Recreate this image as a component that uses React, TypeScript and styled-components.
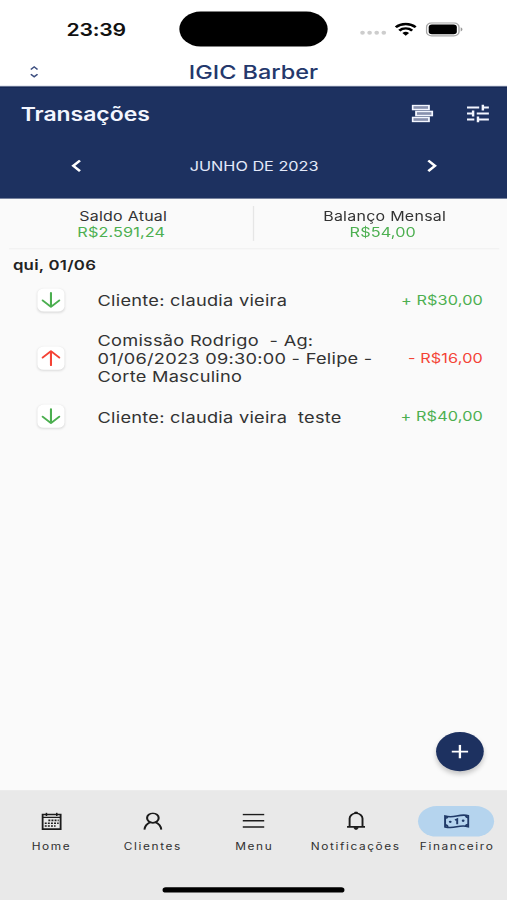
import React from 'react';
import styled, { createGlobalStyle } from 'styled-components';

const NAVY = '#1d3160';
const GREEN = '#4caf50';
const RED = '#f44336';

const GlobalStyle = createGlobalStyle`
  *, *::before, *::after { box-sizing: border-box; }
  html, body { margin: 0; padding: 0; background: #fff; }
  body { width: 507px; height: 900px; overflow: hidden; }
  svg { display: block; flex: none; }
`;

/* The phone screen is laid out in 393 x 852 points and scaled to the window. */
const Screen = styled.div`
  width: 393px;
  height: 852px;
  transform: scale(1.29008, 1.05634);
  transform-origin: 0 0;
  display: flex;
  flex-direction: column;
  background: #fafafa;
  color: #333;
  font-family: Inter, 'Liberation Sans', sans-serif;
  white-space: nowrap;
`;

const StatusBar = styled.div`
  height: 55px;
  flex: none;
  background: #fff;
  display: grid;
  grid-template-columns: 139.2px 114.8px 1fr;
  align-items: center;
`;

const Clock = styled.div`
  padding-left: 51.5px;
  font-size: 16.4px;
  font-weight: 600;
  color: #111;
  letter-spacing: -0.15px;
`;

const Island = styled.div`
  height: 33.6px;
  border-radius: 17px;
  background: #000;
`;

const StatusIcons = styled.div`
  display: flex;
  align-items: center;
  padding-left: 24.6px;
`;

const SignalSlot = styled.div`
  padding-top: 7px;
  margin-right: 6.5px;
`;

const WifiSlot = styled.div`
  margin-right: 7px;
  margin-bottom: 1px;
`;

const TitleBar = styled.header`
  height: 27.3px;
  flex: none;
  background: #fff;
  display: grid;
  grid-template-columns: 60px 1fr 60px;
  align-items: center;
  border-bottom: 0.6px solid #ccd2e2;
`;

const Sorter = styled.div`
  padding-left: 22.8px;
`;

const AppTitle = styled.h1`
  margin: 0;
  text-align: center;
  font-size: 18.2px;
  font-weight: 500;
  line-height: 26px;
  color: #24386c;
`;

const Banner = styled.section`
  height: 105.5px;
  flex: none;
  background: ${NAVY};
  color: #f3f6ff;
  border-top: 1px solid #12244f;
`;

const BannerTop = styled.div`
  height: 50px;
  display: flex;
  align-items: center;
  padding: 0 13.6px 0 16px;
`;

const PageTitle = styled.h2`
  margin: 0;
  flex: 1;
  font-size: 17.8px;
  font-weight: 600;
`;

const BannerActions = styled.div`
  display: flex;
  align-items: center;
  gap: 26px;
  padding-bottom: 1px;
`;

const MonthRow = styled.div`
  height: 48px;
  display: grid;
  grid-template-columns: 118px 1fr 117px;
  align-items: center;
  justify-items: center;
`;

const Month = styled.div`
  font-size: 12.6px;
  color: #e3e9fa;
`;

const Totals = styled.section`
  height: 48px;
  flex: none;
  margin: 0 6.5px;
  display: grid;
  grid-template-columns: 1fr 1.6px 1fr;
  align-items: center;
  border-bottom: 1px solid #f0f0f0;
`;

const TotalsRule = styled.div`
  height: 32.5px;
  background: #e6e6e6;
`;

const Total = styled.div<{ $shift: number }>`
  text-align: center;
  transform: translateX(${(p) => p.$shift}px);
  padding-top: 2px;
  line-height: 15.3px;
`;

const TotalLabel = styled.div`
  font-size: 12.4px;
  letter-spacing: 0.2px;
`;

const TotalValue = styled.div`
  font-size: 12.6px;
  color: ${GREEN};
  letter-spacing: 0.1px;
  margin-right: 3px;
`;

const DayHeading = styled.h3`
  margin: 0;
  flex: none;
  padding: 0 10px;
  height: 29px;
  line-height: 30px;
  font-size: 13px;
  font-weight: 600;
  color: #222;
  letter-spacing: 0.2px;
`;

const List = styled.main`
  flex: 1;
  position: relative;
`;

const Row = styled.div<{ $tall?: boolean }>`
  height: ${(p) => (p.$tall ? '71.4px' : '39.2px')};
  display: grid;
  grid-template-columns: 47px 1fr auto;
  align-items: center;
  padding: 0 18.7px 0 28.6px;
`;

const Tile = styled.div`
  width: 21px;
  height: 22px;
  margin-bottom: 1px;
  display: grid;
  place-items: center;
  background: #fff;
  border-radius: 5px;
  box-shadow: 0 1px 2px rgba(0, 0, 0, 0.12);
`;

const Description = styled.div`
  font-size: 14.1px;
  line-height: 17.3px;
  letter-spacing: 0.21px;
  white-space: pre;
`;

const Amount = styled.div<{ $out?: boolean }>`
  font-size: 12.6px;
  letter-spacing: 0.1px;
  color: ${(p) => (p.$out ? RED : GREEN)};
`;

const Fab = styled.button`
  position: absolute;
  right: 18.2px;
  bottom: 18.3px;
  width: 37px;
  height: 37px;
  padding: 0;
  border: 0;
  border-radius: 50%;
  background: ${NAVY};
  display: grid;
  place-items: center;
  box-shadow: 0 3px 5px rgba(0, 0, 0, 0.22);
`;

const NavBar = styled.nav`
  height: 103.6px;
  flex: none;
  background: #e9e9e9;
  display: flex;
  flex-direction: column;
  align-items: center;
`;

const NavItems = styled.div`
  width: 100%;
  height: 91.6px;
  display: grid;
  grid-template-columns: repeat(5, 1fr);
  padding-top: 14.2px;
`;

const NavItem = styled.div`
  display: flex;
  flex-direction: column;
  align-items: center;
`;

const Pill = styled.div<{ $active?: boolean }>`
  width: 58.4px;
  height: 29.4px;
  padding-left: ${(p) => (p.$active ? '0' : '1px')};
  border-radius: 15px;
  display: grid;
  place-items: center;
  background: ${(p) => (p.$active ? '#b5d4ee' : 'transparent')};
`;

const NavLabel = styled.div`
  margin-top: 2.7px;
  font-size: 9.2px;
  line-height: 14px;
  letter-spacing: 1.25px;
  margin-right: -1.25px;
  color: #303030;
`;

const HomeIndicator = styled.div`
  width: 140.6px;
  height: 4.8px;
  border-radius: 3px;
  background: #000;
`;

const SignalDots = () => (
  <svg width="21" height="6" viewBox="0 0 21 6" fill="#cdcdcd">
    {[2, 7.5, 13, 18.5].map((x) => (
      <circle key={x} cx={x} cy="3" r="1.8" />
    ))}
  </svg>
);

const Wifi = () => (
  <svg width="17" height="13" viewBox="0 0 17 13" fill="none" stroke="#000" strokeWidth="2.3">
    <path d="M.8 4.8a11 11 0 0 1 15.4 0" />
    <path d="M3.5 7.9a7.2 7.2 0 0 1 10 0" />
    <path d="M8.5 12.8 5.9 10.3a3.7 3.7 0 0 1 5.2 0z" fill="#000" stroke="none" />
  </svg>
);

const Battery = () => (
  <svg width="29" height="14" viewBox="0 0 29 14" fill="none">
    <rect x=".6" y=".6" width="25.2" height="12.4" rx="4" stroke="#a8a8a8" strokeWidth="1.1" />
    <rect x="2.3" y="2.2" width="21.8" height="9.2" rx="2.5" fill="#000" />
    <path d="M27.1 4.8c1.8.8 1.8 3.2 0 4z" fill="#999" />
  </svg>
);

const UpDown = () => (
  <svg width="7" height="12" viewBox="0 0 7 12" fill="none" stroke="#3d4f80" strokeWidth="1.3">
    <path d="M.9 3.7l2.6-2.4 2.6 2.4M.9 8.3l2.6 2.4 2.6-2.4" />
  </svg>
);

const Bars = () => (
  <svg width="17" height="17" viewBox="0 0 17 17" fill="#8790ae" stroke="#f3f6ff" strokeWidth="1.4">
    <rect x=".8" y=".8" width="12.7" height="3.9" />
    <rect x="3.5" y="6.5" width="12.6" height="3.9" />
    <rect x=".8" y="12.2" width="12.7" height="3.9" />
  </svg>
);

const Tune = () => (
  <svg width="17" height="17" viewBox="3 3 18 18" fill="#f3f6ff">
    <path d="M3 17v2h6v-2H3zM3 5v2h10V5H3zm10 16v-2h8v-2h-8v-2h-2v6h2zM7 9v2H3v2h4v2h2V9H7zm14 4v-2H11v2h10zm-6-4h2V7h4V5h-4V3h-2v6z" />
  </svg>
);

const Chevron = ({ next }: { next?: boolean }) => (
  <svg width="8" height="12" viewBox="0 0 8 12" fill="none" stroke="#fff" strokeWidth="2.1">
    <path d={next ? 'M1 1l5.2 5L1 11' : 'M7 1L1.8 6 7 11'} />
  </svg>
);

const Arrow = ({ up }: { up?: boolean }) => (
  <svg
    width="15"
    height="16"
    viewBox="0 0 15 16"
    fill="none"
    stroke={up ? RED : GREEN}
    strokeWidth="1.6"
    strokeLinecap="round"
    strokeLinejoin="round"
  >
    <path d={up ? 'M7.5 14.7V1.5M1 7.6l6.5-6.1L14 7.6' : 'M7.5 1.3v13.2M1 8.4l6.5 6.1L14 8.4'} />
  </svg>
);

const Plus = () => (
  <svg width="13" height="13" viewBox="0 0 13 13" stroke="#fff" strokeWidth="1.8">
    <path d="M6.5 0v13M0 6.5h13" />
  </svg>
);

const Calendar = () => (
  <svg width="16" height="17" viewBox="0 0 16 17" fill="none" stroke="#1c1c1c">
    <path d="M1 2.1h14v13.8H1z" strokeWidth="1.5" />
    <path d="M1 4.7h14M4 .4v3M12 .4v3" strokeWidth="1.2" />
    <path d="M5.5 7.6h8M2.7 10.3h10.8M2.7 13h8.4" strokeWidth="1.5" strokeDasharray="1.5 .9" />
  </svg>
);

const Person = () => (
  <svg width="15" height="17" viewBox="0 0 15 17" fill="none" stroke="#1c1c1c" strokeWidth="1.6">
    <circle cx="7.5" cy="5.4" r="4.5" />
    <path d="M.9 16.4c.4-3.9 2.6-5.9 4.5-7M14.1 16.4c-.4-3.9-2.6-5.9-4.5-7" />
  </svg>
);

const Menu = () => (
  <svg width="17" height="14" viewBox="0 0 17 14" stroke="#1c1c1c" strokeWidth="1.4">
    <path d="M0 1h17M0 7h17M0 13h17" />
  </svg>
);

const Bell = () => (
  <svg width="14" height="18" viewBox="0 0 14 18" fill="none" stroke="#1c1c1c" strokeWidth="1.5">
    <path d="M2 14.6V6.9a5 5 0 0 1 10 0v7.7" />
    <path d="M0 14.8h14" />
    <path d="M5.4 15.3a1.6 1.9 0 0 0 3.2 0zM6 2V.7h2V2z" fill="#1c1c1c" strokeWidth=".7" />
  </svg>
);

const Money = () => (
  <svg width="20" height="15" viewBox="0 0 20 15" fill="none" stroke="#203a68" strokeWidth="1.5">
    <path d="M1 2.5c3 1.1 6 .8 9 0s6-1.3 9-.3v10.4c-3-1-6-.7-9 .1s-6 1.1-9 .1z" />
    <path d="M1 4.6q1.7 0 2-1.6M19 4.1q-1.7-.2-2-2M1 10.9q1.7 0 2 2M19 10.6q-1.7-.2-2 1.5" />
    <path d="M8.7 6.4l1.7-1v5" />
    <circle cx="5" cy="8" r="1.1" fill="#203a68" stroke="none" />
    <circle cx="15" cy="7" r="1.1" fill="#203a68" stroke="none" />
  </svg>
);

const transactions = [
  { text: 'Cliente: claudia vieira', amount: '+ R$30,00', out: false },
  {
    text: 'Comissão Rodrigo  - Ag:\n01/06/2023 09:30:00 - Felipe -\nCorte Masculino',
    amount: '- R$16,00',
    out: true,
  },
  { text: 'Cliente: claudia vieira  teste', amount: '+ R$40,00', out: false },
];

const tabs = [
  { label: 'Home', icon: <Calendar /> },
  { label: 'Clientes', icon: <Person /> },
  { label: 'Menu', icon: <Menu /> },
  { label: 'Notificações', icon: <Bell /> },
  { label: 'Financeiro', icon: <Money />, active: true },
];

export default function App() {
  return (
    <>
      <GlobalStyle />
      <Screen>
        <StatusBar>
          <Clock>23:39</Clock>
          <Island />
          <StatusIcons>
            <SignalSlot>
              <SignalDots />
            </SignalSlot>
            <WifiSlot>
              <Wifi />
            </WifiSlot>
            <Battery />
          </StatusIcons>
        </StatusBar>
        <TitleBar>
          <Sorter>
            <UpDown />
          </Sorter>
          <AppTitle>IGIC Barber</AppTitle>
        </TitleBar>
        <Banner>
          <BannerTop>
            <PageTitle>Transações</PageTitle>
            <BannerActions>
              <Bars />
              <Tune />
            </BannerActions>
          </BannerTop>
          <MonthRow>
            <Chevron />
            <Month>JUNHO DE 2023</Month>
            <Chevron next />
          </MonthRow>
        </Banner>
        <Totals>
          <Total $shift={-5.6}>
            <TotalLabel>Saldo Atual</TotalLabel>
            <TotalValue>R$2.591,24</TotalValue>
          </Total>
          <TotalsRule />
          <Total $shift={6.3}>
            <TotalLabel>Balanço Mensal</TotalLabel>
            <TotalValue>R$54,00</TotalValue>
          </Total>
        </Totals>
        <DayHeading>qui, 01/06</DayHeading>
        <List>
          {transactions.map((t) => (
            <Row key={t.text} $tall={t.out}>
              <Tile>
                <Arrow up={t.out} />
              </Tile>
              <Description>{t.text}</Description>
              <Amount $out={t.out}>{t.amount}</Amount>
            </Row>
          ))}
          <Fab aria-label="Adicionar">
            <Plus />
          </Fab>
        </List>
        <NavBar>
          <NavItems>
            {tabs.map((tab) => (
              <NavItem key={tab.label}>
                <Pill $active={tab.active}>{tab.icon}</Pill>
                <NavLabel>{tab.label}</NavLabel>
              </NavItem>
            ))}
          </NavItems>
          <HomeIndicator />
        </NavBar>
      </Screen>
    </>
  );
}
